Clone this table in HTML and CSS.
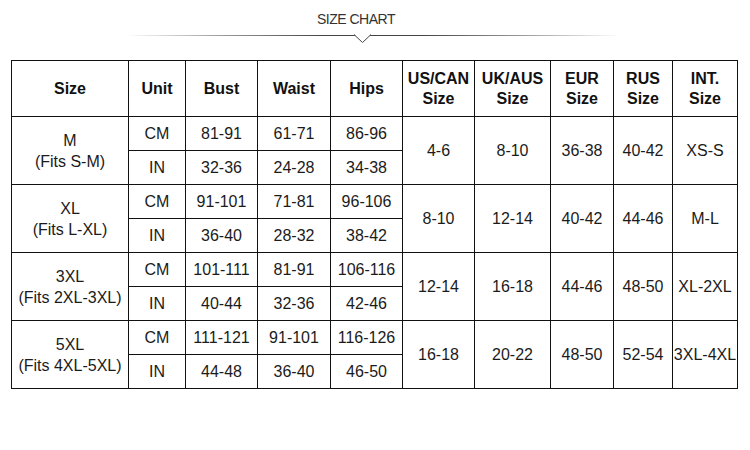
FILE: index.html
```html
<!DOCTYPE html>
<html>
<head>
<meta charset="utf-8">
<link rel="stylesheet" href="styles.css">
</head>
<body>
<div class="chart-head">
  <div class="title">SIZE CHART</div>
  <div class="rule">
    <svg class="notch" width="17" height="10" viewBox="0 0 17 10"><polygon points="0,0.5 8.5,8.5 17,0.5" fill="#fff"/><polyline points="0,0.5 8.5,8.5 17,0.5" fill="none" stroke="#444" stroke-width="1"/></svg>
  </div>
</div>
<div class="wrap">
<table class="chart">
  <colgroup>
    <col class="c-size"><col class="c-unit"><col class="c-bust"><col class="c-waist"><col class="c-hips"><col class="c-us"><col class="c-uk"><col class="c-eur"><col class="c-rus"><col class="c-int">
  </colgroup>
  <thead>
    <tr class="hrow">
      <th>Size</th><th>Unit</th><th>Bust</th><th>Waist</th><th>Hips</th>
      <th>US/CAN<br>Size</th><th>UK/AUS<br>Size</th><th>EUR<br>Size</th><th>RUS<br>Size</th><th>INT.<br>Size</th>
    </tr>
  </thead>
  <tbody>
    <tr><td rowspan="2" class="sz">M<br>(Fits S-M)</td><td>CM</td><td>81-91</td><td>61-71</td><td>86-96</td><td rowspan="2">4-6</td><td rowspan="2">8-10</td><td rowspan="2">36-38</td><td rowspan="2">40-42</td><td rowspan="2">XS-S</td></tr>
    <tr><td>IN</td><td>32-36</td><td>24-28</td><td>34-38</td></tr>
    <tr><td rowspan="2" class="sz">XL<br>(Fits L-XL)</td><td>CM</td><td>91-101</td><td>71-81</td><td>96-106</td><td rowspan="2">8-10</td><td rowspan="2">12-14</td><td rowspan="2">40-42</td><td rowspan="2">44-46</td><td rowspan="2">M-L</td></tr>
    <tr><td>IN</td><td>36-40</td><td>28-32</td><td>38-42</td></tr>
    <tr><td rowspan="2" class="sz">3XL<br>(Fits 2XL-3XL)</td><td>CM</td><td>101-111</td><td>81-91</td><td>106-116</td><td rowspan="2">12-14</td><td rowspan="2">16-18</td><td rowspan="2">44-46</td><td rowspan="2">48-50</td><td rowspan="2">XL-2XL</td></tr>
    <tr><td>IN</td><td>40-44</td><td>32-36</td><td>42-46</td></tr>
    <tr><td rowspan="2" class="sz">5XL<br>(Fits 4XL-5XL)</td><td>CM</td><td>111-121</td><td>91-101</td><td>116-126</td><td rowspan="2">16-18</td><td rowspan="2">20-22</td><td rowspan="2">48-50</td><td rowspan="2">52-54</td><td rowspan="2">3XL-4XL</td></tr>
    <tr><td>IN</td><td>44-48</td><td>36-40</td><td>46-50</td></tr>
  </tbody>
</table>
</div>
</body>
</html>
```
FILE: styles.css
```css
html, body { margin: 0; padding: 0; background: #fff; }
body { font-family: "Liberation Sans", Arial, sans-serif; color: #1b1b1b; width: 750px; height: 450px; overflow: hidden; }

.chart-head { height: 60px; }
.title {
  padding-top: 10px;
  padding-left: 317px;
  font-size: 14px;
  letter-spacing: -0.5px;
  line-height: 18px;
  color: #333;
}
.rule {
  position: relative;
  margin-top: 7px;
  margin-left: 125px;
  width: 495px;
  height: 1px;
  background: linear-gradient(to right, rgba(60,60,60,0) 0%, #999 20%, #444 40%, #444 60%, #999 80%, rgba(60,60,60,0) 100%);
}
.notch { position: absolute; left: 229px; top: -1px; display: block; }

.wrap { padding-left: 11px; }
.chart {
  border-collapse: collapse;
  table-layout: fixed;
  width: 726px;
}
.c-size { width: 117px; }
.c-unit { width: 57px; }
.c-bust { width: 72px; }
.c-waist { width: 73px; }
.c-hips { width: 72px; }
.c-us { width: 72px; }
.c-uk { width: 76px; }
.c-eur { width: 63px; }
.c-rus { width: 59px; }
.c-int { width: 65px; }

.chart th, .chart td {
  border: 1px solid #111;
  padding: 0;
  text-align: center;
  vertical-align: middle;
  font-size: 16px;
  white-space: nowrap;
  overflow: hidden;
}
.chart th { font-weight: bold; line-height: 20px; color: #111; }
.chart td { line-height: 21px; }
.hrow { height: 56px; }
.chart tbody tr { height: 34px; }
```
